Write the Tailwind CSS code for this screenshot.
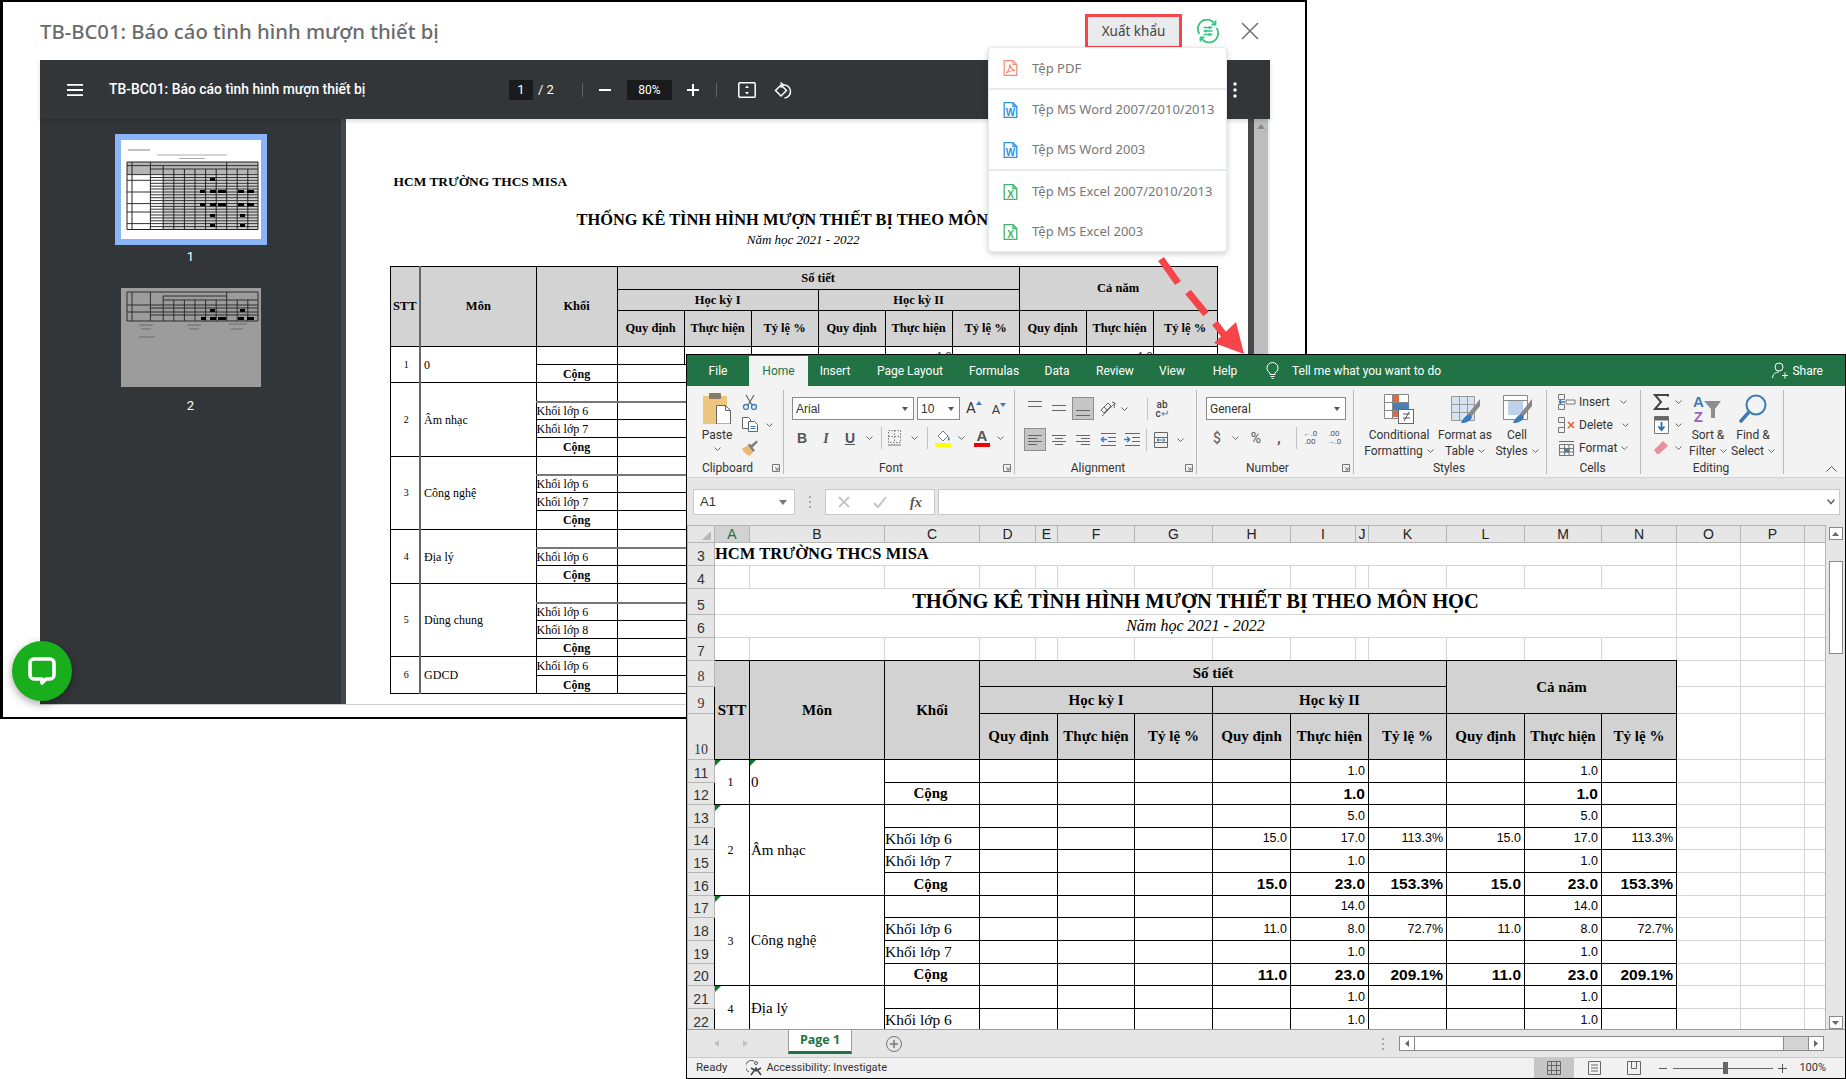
<!DOCTYPE html>
<html lang="vi">
<head>
<meta charset="UTF-8">
<title>Xuất khẩu báo cáo</title>
<script src="https://cdn.jsdelivr.net/npm/@tailwindcss/browser@4"></script>
</head>
<body class="relative w-[1846px] h-[1079px] overflow-hidden bg-white [font-family:'Noto_Sans',sans-serif]">

<!-- shared icons -->
<svg class="hidden">
  <symbol id="chev" viewBox="0 0 7 4"><path d="M.5.5l3 3 3-3" fill="none" stroke="#666"/></symbol>
  <symbol id="launch" viewBox="0 0 8 8"><path d="M.5 7.500v-7h7v7z M3 3l3 3M6 3.500V6H3.500" fill="none" stroke="#777"/></symbol>
  <symbol id="word" viewBox="0 0 14 16"><path d="M.7.7h8.800l3.800 3.800v10.800H.7z M9.500.7v3.800h3.800" fill="none" stroke="#2f8fe0" stroke-width="1.300"/><text x="7" y="13.500" text-anchor="middle" font-family="Liberation Sans" font-weight="700" font-size="10" fill="#2f8fe0">W</text></symbol>
  <symbol id="excel" viewBox="0 0 14 16"><path d="M.7.7h8.800l3.800 3.800v10.800H.7z M9.500.7v3.800h3.800" fill="none" stroke="#41b56f" stroke-width="1.300"/><text x="7" y="13.500" text-anchor="middle" font-family="Liberation Sans" font-weight="700" font-size="10" fill="#41b56f">X</text></symbol>
</svg>

<!-- report preview window -->
<div class="absolute left-0 top-0 w-[1307px] h-[719px] flex flex-col border-t-2 border-r-2 border-b-2 border-l-[3px] border-black bg-white">
  <div class="h-[58px] shrink-0 flex items-center pl-[37px] pr-[46px]">
    <div class="text-[20.300px] text-[#6b6b6b] font-medium whitespace-nowrap">TB-BC01: Báo cáo tình hình mượn thiết bị</div>
    <div class="ml-auto w-[97px] h-[35px] flex items-center justify-center border-[3px] border-[#f5444a] bg-[#e9ebef] text-[13.500px] text-[#444]">Xuất khẩu</div>
    <svg class="ml-[14px] w-[24px] h-[24px]" viewBox="0 0 24 24" fill="none" stroke="#33c481" stroke-width="1.800"><path d="M3.500 15a9 9 0 0 1 15-10.500M20.500 9a9 9 0 0 1-15 10.500"/><path d="M19.500 1.500v4h-4M4.500 22.500v-4h4" stroke-linejoin="round"/><path d="M7.500 8.500h9M7.500 12h9M7.500 15.500h9" stroke-width="1.500"/><path d="M13.500 7v3M10 10.500v3M13.500 14v3" stroke-width="1.500"/></svg>
    <svg class="ml-[21px] w-[18px] h-[18px]" viewBox="0 0 18 18" stroke="#6f6f6f" stroke-width="1.500"><path d="M1 1l16 16M17 1L1 17"/></svg>
  </div>

  <div class="ml-[37px] w-[1230px] h-[645px] flex flex-col bg-white border-b border-[#cfcfcf]">
    <!-- pdf viewer toolbar -->
    <div class="relative h-[59px] shrink-0 flex items-center bg-[#323639] text-white shadow-[0_2px_4px_rgba(0,0,0,0.15)] [font-family:Roboto,sans-serif]">
      <svg class="ml-[27px] w-[16px] h-[12px]" viewBox="0 0 16 12" fill="#fff"><path d="M0 0h16v1.800H0zM0 5.100h16v1.800H0zM0 10.200h16V12H0z"/></svg>
      <div class="ml-[26px] w-[257px] text-[13.900px] font-medium whitespace-nowrap">TB-BC01: Báo cáo tình hình mượn thiết bị</div>
      <div class="ml-[143px] w-[24px] h-[20px] flex items-center justify-center bg-[#191b1c] text-[13px]">1</div>
      <div class="ml-[5px] w-[20px] text-[13px] whitespace-nowrap">/ 2</div>
      <div class="ml-[24px] w-px h-[14px] bg-[#5f6368]"></div>
      <div class="ml-[16px] w-[12px] h-[2px] bg-white"></div>
      <div class="ml-[16px] w-[45px] h-[20px] flex items-center justify-center bg-[#191b1c] text-[12px]">80%</div>
      <svg class="ml-[15px] w-[12px] h-[12px]" viewBox="0 0 12 12" fill="#fff"><path d="M5 0h2v5h5v2H7v5H5V7H0V5h5z"/></svg>
      <div class="ml-[17px] w-px h-[14px] bg-[#5f6368]"></div>
      <svg class="ml-[21px] w-[18px] h-[16px]" viewBox="0 0 18 16" fill="none" stroke="#fff" stroke-width="1.500"><rect x=".8" y=".8" width="16.400" height="14.400" rx="1"/><path d="M9 3.500l-2 2.500h4zM9 12.500l-2-2.500h4z" fill="#fff" stroke="none"/></svg>
      <svg class="ml-[18px] w-[18px] h-[18px]" viewBox="0 0 18 18" fill="none" stroke="#fff" stroke-width="1.500"><path d="M7 4l-5.500 5.500L7 15l5.500-5.500z"/><path d="M6.500 1.500l3 2.500-3 2.500" /><path d="M9.500 4a6.500 6.500 0 0 1 1 13"/></svg>
      <svg class="ml-auto mr-[33px] w-[4px] h-[16px]" viewBox="0 0 4 16" fill="#fff"><circle cx="2" cy="2" r="1.700"/><circle cx="2" cy="8" r="1.700"/><circle cx="2" cy="14" r="1.700"/></svg>
    </div>

    <div class="flex-1 min-h-0 flex">
      <!-- page thumbnails -->
      <div class="w-[301px] shrink-0 flex flex-col items-center pt-[15px] bg-[#323639] text-white text-[13px] [font-family:Roboto,sans-serif]">
        <div class="w-[152px] h-[111px] p-[6px] bg-[#8ab4f8]">
          <svg class="w-[140px] h-[99px] bg-white" viewBox="0 0 140 99">
            <path d="M7 10h22" stroke="#666" stroke-width=".8"/><path d="M36 15h70M58 18.500h26" stroke="#999" stroke-width=".8"/>
            <path d="M6 22h131v12.600H6z" fill="#b5b5b5"/>
            <path d="M42 34.600h95v55H42z" fill="#cfcfcf"/>
            <path d="M6 25.600h131M29 29h108M6 34.600h131M29 37.500h108M6 40.300h131M29 43.300h108M29 46.200h108M29 49h108M6 52h131M29 54.800h108M29 57.700h108M29 60.600h108M6 63.600h131M29 66.400h108M29 69.200h108M6 72h131M29 75h108M29 77.900h108M29 80.800h108M6 83.600h131M29 86.600h108" stroke="#333" stroke-width="1" fill="none"/>
            <path d="M6 22h131v67.500H6zM11 22v67.500M29.400 22v67.500M42.200 25.600v64M52.800 29v60.500M63.400 29v60.500M74 29v60.500M84.600 29v60.500M95.200 29v60.500M105.700 22v67.500M116.200 29v60.500M126.800 29v60.500" stroke="#222" stroke-width="1" fill="none"/>
            <path d="M89 38h5v3h-5zM79 50h5v3h-5zM89 50h6v3h-6zM97 50h8v3h-8zM117 50h6v3h-6zM126 50h7v3h-7zM89 38h5zM79 63h5v3h-5zM89 63h6v3h-6zM97 63h8v3h-8zM117 63h6v3h-6zM126 63h7v3h-7zM89 74h5v3h-5zM119 74h5v3h-5zM89 84h5v3h-5zM119 84h5v3h-5z" fill="#000"/>
          </svg>
        </div>
        <div class="h-[24px] flex items-center">1</div>
        <svg class="mt-[19px] w-[140px] h-[99px] bg-[#9c9c9c]" viewBox="0 0 140 99">
          <path d="M6 4h131v29H6zM11 4v29M29.400 4v29M42.200 8v25M52.800 12v21M63.400 12v21M74 12v21M84.600 12v21M95.200 12v21M105.700 4v29M116.200 12v21M126.800 12v21M42 8h64M42 12h95M6 17h131M29 20h108M6 24h131M29 27h108" stroke="#2c2c2c" stroke-width="1" fill="none"/>
          <path d="M80 29h5v3h-5zM89 29h6v3h-6zM97 29h8v3h-8zM117 29h6v3h-6zM126 29h7v3h-7zM89 21h5v3h-5zM119 21h5v3h-5z" fill="#000"/>
          <path d="M18 37h14M20 41h10M66 37h14M68 41h10M108 36h18M110 41h12M18 49h16" stroke="#6a6a6a" stroke-width="1"/>
        </svg>
        <div class="h-[38px] flex items-center">2</div>
      </div>
      <div class="w-[5px] shrink-0 bg-[#45494c]"></div>

      <!-- pdf page -->
      <div class="flex-1 min-w-0 overflow-hidden pl-[43.600px] [font-family:'Liberation_Serif',serif] text-black">
        <div class="w-[827px]">
          <div class="mt-[54px] h-[18px] pl-[4px] text-[13.400px] font-bold leading-[18px] whitespace-nowrap">HCM TRƯỜNG THCS MISA</div>
          <div class="mt-[20px] h-[18px] text-center text-[16.400px] font-bold leading-[18px] whitespace-nowrap">THỐNG KÊ TÌNH HÌNH MƯỢN THIẾT BỊ THEO MÔN HỌC</div>
          <div class="mt-[4px] h-[14px] text-center text-[13px] italic leading-[14px]">Năm học 2021 - 2022</div>
          <table class="mt-[19px] w-[827px] table-fixed border-collapse text-[12px] leading-none [&_td]:border [&_td]:border-black [&_td]:p-0 [&_td[rowspan]:nth-child(2)]:border-l-2 [&_td[rowspan]:nth-child(2)]:border-l-[#666]">
            <colgroup><col class="w-[30px]"><col class="w-[116px]"><col class="w-[81px]"><col class="w-[67px]"><col class="w-[67px]"><col class="w-[67px]"><col class="w-[67px]"><col class="w-[67px]"><col class="w-[67px]"><col class="w-[67px]"><col class="w-[67px]"><col class="w-[64px]"></colgroup>
            <tbody class="font-bold text-center bg-[#d3d3d3] text-[12.500px]">
              <tr class="h-[23px]"><td rowspan="3">STT<td rowspan="3">Môn<td rowspan="3">Khối<td colspan="6">Số tiết<td colspan="3" rowspan="2">Cả năm
              <tr class="h-[21px]"><td colspan="3">Học kỳ I<td colspan="3">Học kỳ II
              <tr class="h-[36px]"><td>Quy định<td>Thực hiện<td>Tỷ lệ %<td>Quy định<td>Thực hiện<td>Tỷ lệ %<td>Quy định<td>Thực hiện<td>Tỷ lệ %
            </tbody>
            <tbody class="[&_td:first-child[rowspan]]:text-center [&_td:first-child[rowspan]]:text-[10px] [&_td[rowspan]]:pl-[3px]">
              <tr class="h-[18px]"><td rowspan="2">1<td rowspan="2">0<td><td><td><td><td><td class="pr-[2px] text-right">1.0<td><td><td class="pr-[2px] text-right">1.0<td>
              <tr class="h-[18px]"><td class="font-bold text-center">Cộng<td colspan="9">
              <tr class="h-[19px] [&>td:not([rowspan])]:border-b-2 [&>td:not([rowspan])]:border-b-[#777]"><td rowspan="4">2<td rowspan="4">Âm nhạc<td><td colspan="9">
              <tr class="h-[18px]"><td class="pl-[4px]">Khối lớp 6<td colspan="9">
              <tr class="h-[18px]"><td class="pl-[4px]">Khối lớp 7<td colspan="9">
              <tr class="h-[19px]"><td class="font-bold text-center">Cộng<td colspan="9">
              <tr class="h-[18px] [&>td:not([rowspan])]:border-b-2 [&>td:not([rowspan])]:border-b-[#777]"><td rowspan="4">3<td rowspan="4">Công nghệ<td><td colspan="9">
              <tr class="h-[18px]"><td class="pl-[4px]">Khối lớp 6<td colspan="9">
              <tr class="h-[18px]"><td class="pl-[4px]">Khối lớp 7<td colspan="9">
              <tr class="h-[19px]"><td class="font-bold text-center">Cộng<td colspan="9">
              <tr class="h-[18px] [&>td:not([rowspan])]:border-b-2 [&>td:not([rowspan])]:border-b-[#777]"><td rowspan="3">4<td rowspan="3">Địa lý<td><td colspan="9">
              <tr class="h-[18px]"><td class="pl-[4px]">Khối lớp 6<td colspan="9">
              <tr class="h-[18px]"><td class="font-bold text-center">Cộng<td colspan="9">
              <tr class="h-[19px] [&>td:not([rowspan])]:border-b-2 [&>td:not([rowspan])]:border-b-[#777]"><td rowspan="4">5<td rowspan="4">Dùng chung<td><td colspan="9">
              <tr class="h-[18px]"><td class="pl-[4px]">Khối lớp 6<td colspan="9">
              <tr class="h-[18px]"><td class="pl-[4px]">Khối lớp 8<td colspan="9">
              <tr class="h-[18px]"><td class="font-bold text-center">Cộng<td colspan="9">
              <tr class="h-[19px]"><td rowspan="2">6<td rowspan="2">GDCD<td class="pl-[4px]">Khối lớp 6<td colspan="9">
              <tr class="h-[18px]"><td class="font-bold text-center">Cộng<td colspan="9">
            </tbody>
          </table>
        </div>
      </div>
      <div class="w-[6px] shrink-0 bg-[#45494c]"></div>
      <div class="w-[14px] shrink-0 bg-[#bdbdbd] flex justify-center pt-[5px]"><svg class="w-[8px] h-[5px]" viewBox="0 0 8 5" fill="#888"><path d="M4 0l4 5H0z"/></svg></div>
      <div class="w-[2px] shrink-0 bg-[#eeeeee]"></div>
    </div>
  </div>
</div>

<!-- floating chat button -->
<div class="absolute left-[12px] top-[641px] w-[60px] h-[60px] flex items-center justify-center rounded-full bg-[#18ae1c] shadow-[0_3px_8px_rgba(0,0,0,0.35)]">
  <svg class="w-[30px] h-[30px]" viewBox="0 0 30 30" fill="none" stroke="#fff" stroke-width="3.600" stroke-linejoin="round"><path d="M7 3h16a4 4 0 0 1 4 4v12a4 4 0 0 1-4 4h-4l-4 4v-4H7a4 4 0 0 1-4-4V7a4 4 0 0 1 4-4z"/></svg>
</div>

<!-- export menu -->
<div class="absolute left-[988px] top-[47px] w-[239px] h-[205px] flex flex-col bg-white rounded-[4px] border border-[#e7e9f0] shadow-[0_2px_6px_rgba(0,0,0,0.2)] text-[13px] text-[#777] whitespace-nowrap">
  <div class="h-[40px] pt-px flex items-center pl-[14px] gap-[14px]"><svg class="w-[15px] h-[16px]" viewBox="0 0 14 16" fill="none" stroke="#f58a76" stroke-width="1.200"><path d="M.7.7h8.800l3.800 3.800v10.800H.7zM9.500.7v3.800h3.800"/><path d="M2.500 13c2-1 4-5 3.800-8.500.8 3.500 2.500 5.500 5.200 6-3 0-6 .5-9 2.500z"/></svg>Tệp PDF</div>
  <div class="h-[2px] bg-[#e6e8f2]"></div>
  <div class="h-[40px] pt-px flex items-center pl-[14px] gap-[14px]"><svg class="w-[15px] h-[16px]"><use href="#word"/></svg>Tệp MS Word 2007/2010/2013</div>
  <div class="h-[40px] pt-px flex items-center pl-[14px] gap-[14px]"><svg class="w-[15px] h-[16px]"><use href="#word"/></svg>Tệp MS Word 2003</div>
  <div class="h-[2px] bg-[#e6e8f2]"></div>
  <div class="h-[40px] pt-px flex items-center pl-[14px] gap-[14px]"><svg class="w-[15px] h-[16px]"><use href="#excel"/></svg>Tệp MS Excel 2007/2010/2013</div>
  <div class="h-[40px] pt-px flex items-center pl-[14px] gap-[14px]"><svg class="w-[15px] h-[16px]"><use href="#excel"/></svg>Tệp MS Excel 2003</div>
</div>

<!-- excel window -->
<div class="absolute left-[686px] top-[354px] w-[1160px] h-[725px] flex flex-col border border-black bg-[#e6e6e6] text-[12px] text-[#333] [font-family:Roboto,sans-serif]">
  <!-- tabs -->
  <div class="h-[31px] shrink-0 flex items-stretch bg-[#217346] text-white text-[12px]">
    <div class="w-[62px] flex items-center justify-center">File</div>
    <div class="mt-px w-[59px] flex items-center justify-center bg-[#f3f3f3] text-[#217346]">Home</div>
    <div class="w-[54px] flex items-center justify-center">Insert</div>
    <div class="w-[96px] flex items-center justify-center">Page Layout</div>
    <div class="w-[72px] flex items-center justify-center">Formulas</div>
    <div class="w-[54px] flex items-center justify-center">Data</div>
    <div class="w-[62px] flex items-center justify-center">Review</div>
    <div class="w-[52px] flex items-center justify-center">View</div>
    <div class="w-[54px] flex items-center justify-center">Help</div>
    <div class="w-[40px] flex items-center justify-center"><svg class="w-[13px] h-[17px]" viewBox="0 0 13 17" fill="none" stroke="#fff"><path d="M4 12.500v-1.500C2.500 10 1 8.500 1 6a5.500 5.500 0 0 1 11 0c0 2.500-1.500 4-3 5v1.500zM4.500 14.500h4M5.500 16.500h2"/></svg></div>
    <div class="flex items-center whitespace-nowrap">Tell me what you want to do</div>
    <div class="ml-auto pr-[22px] flex items-center gap-[3px]"><svg class="w-[17px] h-[17px]" viewBox="0 0 17 17" fill="none" stroke="#fff"><circle cx="7" cy="5" r="4"/><path d="M.5 16c.5-4 3-6 6.500-6M10 13.500h6M13 10.500v6"/></svg>Share</div>
  </div>

  <!-- ribbon -->
  <div class="h-[92px] shrink-0 flex pt-[4px] bg-[#f3f3f3] border-b border-[#d2d2d2]">
    <!-- Clipboard -->
    <div class="w-[97px] h-[84px] flex flex-col border-r border-[#b9b9b9]">
      <div class="h-[74px] flex">
        <div class="ml-[5px] w-[50px] flex flex-col items-center">
          <svg class="mt-[3px] w-[28px] h-[31px]" viewBox="0 0 28 31"><rect x="0" y="3" width="24" height="28" rx="1" fill="#eec67f"/><rect x="6" y="0" width="12" height="6" rx="1" fill="#857a69"/><path d="M13.500 12.500h9l5 5v13.500h-14z" fill="#fff" stroke="#666"/><path d="M22.500 12.500v5h5" fill="none" stroke="#666"/></svg>
          <div class="mt-[3px] leading-[16px]">Paste</div>
          <svg class="mt-[4px] w-[7px] h-[4px]"><use href="#chev"/></svg>
        </div>
        <div class="flex flex-col">
          <div class="h-[23px] flex items-center"><svg class="w-[16px] h-[16px]" viewBox="0 0 16 16" fill="none" stroke="#666"><path d="M4 1l6 10M12 1L6 11" stroke-width="1.200"/><circle cx="4" cy="13" r="2.500" stroke="#3c7ab8" stroke-width="1.300"/><circle cx="12" cy="13" r="2.500" stroke="#3c7ab8" stroke-width="1.300"/></svg></div>
          <div class="h-[23px] flex items-center"><svg class="w-[17px] h-[15px]" viewBox="0 0 17 15" fill="#fff" stroke="#666"><path d="M.5.500h6l2 2v9h-8z"/><path d="M6.500 4.500h6l3 3v7h-9z"/><path d="M8.500 9.500h5M8.500 11.500h5" stroke="#3c7ab8"/></svg><svg class="ml-[7px] w-[7px] h-[4px]"><use href="#chev"/></svg></div>
          <div class="h-[23px] flex items-center"><svg class="w-[17px] h-[16px]" viewBox="0 0 17 16"><path d="M0 9l6-4 5 7-3 4c-3-1-6-3-8-7z" fill="#e9b96e"/><path d="M6 5l5 7 2-1.500-2.500-3L16 2l-1.500-1.500L9 5 7.500 3.500z" fill="#7d7d7d"/></svg></div>
        </div>
      </div>
      <div class="flex items-center"><div class="w-[81px] text-center leading-[12px]">Clipboard</div><div class="w-[15px] flex justify-center"><svg class="w-[8px] h-[8px]"><use href="#launch"/></svg></div></div>
    </div>

    <!-- Font -->
    <div class="w-[231px] h-[84px] flex flex-col border-r border-[#b9b9b9]">
      <div class="h-[74px] pt-[7px]">
        <div class="h-[23px] flex items-center">
          <div class="ml-[8px] w-[122px] h-[23px] flex items-center justify-between px-[3px] bg-white border border-[#8a8a8a] [font-family:'Liberation_Sans',sans-serif]">Arial<svg class="mr-[2px] w-[6px] h-[4px]" viewBox="0 0 6 4" fill="#555"><path d="M0 0h6L3 4z"/></svg></div>
          <div class="ml-[3px] w-[43px] h-[23px] flex items-center justify-between px-[3px] bg-white border border-[#8a8a8a] [font-family:'Liberation_Sans',sans-serif]">10<svg class="mr-[2px] w-[6px] h-[4px]" viewBox="0 0 6 4" fill="#555"><path d="M0 0h6L3 4z"/></svg></div>
          <div class="ml-[2px] w-[24px] flex justify-center text-[15px] leading-none">A<svg class="w-[6px] h-[4px]" viewBox="0 0 6 4" fill="#3c7ab8"><path d="M3 0l3 4H0z"/></svg></div>
          <div class="ml-px w-[24px] flex justify-center text-[13px] leading-none pt-[2px]">A<svg class="w-[6px] h-[4px]" viewBox="0 0 6 4" fill="#3c7ab8"><path d="M0 0h6L3 4z"/></svg></div>
        </div>
        <div class="mt-[6px] h-[24px] flex items-center text-[14px] text-[#555] [font-family:'Liberation_Serif',serif]">
          <div class="ml-[6px] w-[24px] text-center font-bold [font-family:'Liberation_Sans',sans-serif]">B</div>
          <div class="w-[24px] text-center italic font-bold">I</div>
          <div class="w-[24px] text-center underline font-bold [font-family:'Liberation_Sans',sans-serif]">U</div>
          <div class="w-[14px] flex justify-center"><svg class="w-[7px] h-[4px]"><use href="#chev"/></svg></div>
          <div class="ml-[5px] w-px h-[22px] bg-[#c2c2c2]"></div>
          <svg class="ml-[6px] w-[16px] h-[16px]" viewBox="0 0 16 16" fill="none" stroke="#777" stroke-dasharray="1.500 1.500"><path d="M.5.500h12v12H.5zM6.500.5v12M.5 6.500h12"/><path d="M0 15h13" stroke-dasharray="0" stroke="#777"/></svg>
          <div class="w-[20px] flex justify-center"><svg class="w-[7px] h-[4px]"><use href="#chev"/></svg></div>
          <div class="ml-[3px] w-px h-[22px] bg-[#c2c2c2]"></div>
          <svg class="ml-[7px] w-[16px] h-[18px]" viewBox="0 0 16 18"><path d="M3 7l5-5 5 5-5 5z" fill="#fff" stroke="#777"/><path d="M13 7c1.500 2 2 3 1.500 4-.5 1-2 .5-1.500-1z" fill="#3c7ab8"/><path d="M0 14h16v4H0z" fill="#ffff00"/></svg>
          <div class="w-[20px] flex justify-center"><svg class="w-[7px] h-[4px]"><use href="#chev"/></svg></div>
          <div class="w-[22px] flex flex-col items-center text-[15px] leading-[14px] font-bold text-[#555] [font-family:'Liberation_Sans',sans-serif]">A<div class="w-[16px] h-[4px] bg-[#f00000]"></div></div>
          <div class="w-[14px] flex justify-center"><svg class="w-[7px] h-[4px]"><use href="#chev"/></svg></div>
        </div>
      </div>
      <div class="flex items-center"><div class="w-[214px] text-center leading-[12px]">Font</div><div class="ml-[2px] w-[14px] flex justify-center"><svg class="w-[8px] h-[8px]"><use href="#launch"/></svg></div></div>
    </div>

    <!-- Alignment -->
    <div class="w-[182px] h-[84px] flex flex-col border-r border-[#b9b9b9]">
      <div class="h-[74px] pt-[7px]">
        <div class="h-[23px] flex items-center">
          <svg class="ml-[9px] w-[22px] h-[23px]" viewBox="0 0 22 23" stroke="#666"><path d="M4 4.500h14M4 9.500h14"/></svg>
          <svg class="ml-[2px] w-[22px] h-[23px]" viewBox="0 0 22 23" stroke="#666"><path d="M4 8.500h14M4 13.500h14"/></svg>
          <svg class="ml-[2px] w-[22px] h-[23px] bg-[#c6c6c6] border border-[#8f8f8f]" viewBox="0 0 20 21" stroke="#666"><path d="M3 12.500h14M3 17.500h14"/></svg>
          <svg class="ml-[3px] w-[22px] h-[23px]" viewBox="0 0 22 23" fill="none" stroke="#666"><path d="M4 13l7-7 3 3-7 7zM7 10l3 3M15 5l3 1-1 5M5 19l13-13"/></svg>
          <div class="w-[10px] flex justify-center"><svg class="w-[7px] h-[4px]"><use href="#chev"/></svg></div>
          <div class="ml-[18px] w-px h-[22px] bg-[#c2c2c2]"></div>
          <div class="ml-[4px] w-[20px] text-center text-[10px] leading-[9px] text-[#444] font-medium">ab<br>c<span class="text-[#3c7ab8]">↵</span></div>
        </div>
        <div class="mt-[8px] h-[23px] flex items-center">
          <svg class="ml-[9px] w-[22px] h-[23px] bg-[#c6c6c6] border border-[#8f8f8f]" viewBox="0 0 20 21" stroke="#666"><path d="M3 6.500h14M3 9.500h9M3 12.500h14M3 15.500h9"/></svg>
          <svg class="ml-[2px] w-[22px] h-[23px]" viewBox="0 0 22 23" stroke="#666"><path d="M4 7.500h14M7 10.500h8M4 13.500h14M7 16.500h8"/></svg>
          <svg class="ml-[2px] w-[22px] h-[23px]" viewBox="0 0 22 23" stroke="#666"><path d="M4 7.500h14M9 10.500h9M4 13.500h14M9 16.500h9"/></svg>
          <svg class="ml-[3px] w-[22px] h-[23px]" viewBox="0 0 22 23" fill="none" stroke="#666"><path d="M4 5.500h15M11 9.500h8M11 13.500h8M4 17.500h15"/><path d="M4 11.500h6M4 11.500l3-2.500M4 11.500l3 2.500" stroke="#3c7ab8" stroke-width="1.300"/></svg>
          <svg class="ml-[2px] w-[22px] h-[23px]" viewBox="0 0 22 23" fill="none" stroke="#666"><path d="M4 5.500h15M11 9.500h8M11 13.500h8M4 17.500h15"/><path d="M3 11.500h6M9 11.500l-3-2.500M9 11.500l-3 2.500" stroke="#3c7ab8" stroke-width="1.300"/></svg>
          <div class="ml-[3px] w-px h-[22px] bg-[#c2c2c2]"></div>
          <svg class="ml-[4px] w-[20px] h-[18px]" viewBox="0 0 20 18" fill="none" stroke="#666"><path d="M3.500 1.500h13v15h-13zM3.500 6.500h13M3.500 11.500h13"/><path d="M6 9h8M6 9l2-1.500M6 9l2 1.500M14 9l-2-1.500M14 9l-2 1.500" stroke="#3c7ab8"/></svg>
          <div class="ml-[4px] w-[10px] flex justify-center"><svg class="w-[7px] h-[4px]"><use href="#chev"/></svg></div>
        </div>
      </div>
      <div class="flex items-center"><div class="w-[166px] text-center leading-[12px]">Alignment</div><div class="ml-px w-[14px] flex justify-center"><svg class="w-[8px] h-[8px]"><use href="#launch"/></svg></div></div>
    </div>

    <!-- Number -->
    <div class="w-[157px] h-[84px] flex flex-col border-r border-[#b9b9b9]">
      <div class="h-[74px] pt-[7px]">
        <div class="ml-[9px] w-[140px] h-[23px] flex items-center justify-between px-[3px] bg-white border border-[#8a8a8a]">General<svg class="mr-[2px] w-[6px] h-[4px]" viewBox="0 0 6 4" fill="#555"><path d="M0 0h6L3 4z"/></svg></div>
        <div class="mt-[6px] h-[24px] flex items-center text-[14px] text-[#555]">
          <div class="ml-[10px] w-[20px] text-center">$</div>
          <div class="w-[16px] flex justify-center"><svg class="w-[7px] h-[4px]"><use href="#chev"/></svg></div>
          <div class="ml-[2px] w-[22px] text-center">%</div>
          <div class="ml-[2px] w-[20px] text-center font-bold">,</div>
          <div class="ml-[7px] w-px h-[22px] bg-[#c2c2c2]"></div>
          <div class="ml-[2px] w-[22px] text-center text-[8px] leading-[8px] text-[#555]"><span class="text-[#3c7ab8]">←</span>.0<br>.00</div>
          <div class="ml-[2px] w-[22px] text-center text-[8px] leading-[8px] text-[#555]">.00<br><span class="text-[#3c7ab8]">→</span>.0</div>
        </div>
      </div>
      <div class="flex items-center"><div class="w-[141px] text-center leading-[12px]">Number</div><div class="w-[15px] flex justify-center"><svg class="w-[8px] h-[8px]"><use href="#launch"/></svg></div></div>
    </div>

    <!-- Styles -->
    <div class="w-[193px] h-[84px] flex flex-col border-r border-[#b9b9b9]">
      <div class="h-[74px] flex pl-[8px] text-center leading-[16px] whitespace-nowrap">
        <div class="w-[74px] flex flex-col items-center">
          <svg class="mt-[4px] mb-[3px] w-[30px] h-[30px]" viewBox="0 0 30 30"><path d="M.5.500h24v24H.5zM8.500.5v24M.5 8.500h24M.5 16.500h24" fill="#fff" stroke="#888"/><path d="M9 1h6v7H9z" fill="#e06a3e"/><path d="M9 9h16v7H9z" fill="#4a7fb5"/><path d="M9 17h13v6H9z" fill="#e06a3e"/><rect x="14.500" y="15.500" width="15" height="14" fill="#fff" stroke="#666"/><path d="M19 20h7M19 24h7M25 18l-5 9" stroke="#555"/></svg>
          <div>Conditional</div>
          <div class="flex items-center gap-[4px]">Formatting<svg class="w-[7px] h-[4px]"><use href="#chev"/></svg></div>
        </div>
        <div class="w-[58px] flex flex-col items-center">
          <svg class="mt-[4px] mb-[3px] w-[30px] h-[30px]" viewBox="0 0 30 30"><path d="M1.500 2.500h23v24h-23z" fill="#d6e3f1"/><path d="M1.500 2.500h23v24h-23zM9.500 2.500v24M17.500 2.500v24M1.500 10.500h23M1.500 18.500h23" fill="none" stroke="#999"/><path d="M30 5L18 20l3 3L30 12z" fill="#888"/><path d="M19 20c-4 2-7 6-8 9 5 0 10-2 11-6z" fill="#3c7ab8"/></svg>
          <div>Format as</div>
          <div class="flex items-center gap-[4px]">Table<svg class="w-[7px] h-[4px]"><use href="#chev"/></svg></div>
        </div>
        <div class="w-[46px] flex flex-col items-center">
          <svg class="mt-[4px] mb-[3px] w-[30px] h-[30px]" viewBox="0 0 30 30"><path d="M1.500 1.500h24v24h-24z" fill="#fff" stroke="#888"/><path d="M6 7h15v14H6z" fill="#bcd2e8"/><path d="M1.500 6.500h24" stroke="#888"/><path d="M30 5L18 20l3 3L30 12z" fill="#888"/><path d="M19 20c-4 2-7 6-8 9 5 0 10-2 11-6z" fill="#3c7ab8"/></svg>
          <div>Cell</div>
          <div class="flex items-center gap-[4px]">Styles<svg class="w-[7px] h-[4px]"><use href="#chev"/></svg></div>
        </div>
      </div>
      <div class="text-center leading-[12px] pr-[2px]">Styles</div>
    </div>

    <!-- Cells -->
    <div class="w-[94px] h-[84px] flex flex-col border-r border-[#b9b9b9]">
      <div class="h-[74px] pl-[11px]">
        <div class="h-[23px] flex items-center"><svg class="w-[18px] h-[16px]" viewBox="0 0 18 16" fill="none" stroke="#777"><path d="M.5.500h6v5h-6zM.5 10.500h6v5h-6zM8 6h9v4H8z"/><path d="M1 8h6M1 8l2-2M1 8l2 2" stroke="#3c7ab8" stroke-width="1.300"/></svg><div class="ml-[3px] w-[37px]">Insert</div><div class="w-[14px] flex justify-center"><svg class="w-[7px] h-[4px]"><use href="#chev"/></svg></div></div>
        <div class="h-[23px] flex items-center"><svg class="w-[18px] h-[16px]" viewBox="0 0 18 16" fill="none" stroke="#777"><path d="M.5.500h6v5h-6zM.5 10.500h6v5h-6zM6.500 5.500v5"/><path d="M10 5l6 6M16 5l-6 6" stroke="#e8632f" stroke-width="1.600"/></svg><div class="ml-[3px] w-[39px]">Delete</div><div class="w-[14px] flex justify-center"><svg class="w-[7px] h-[4px]"><use href="#chev"/></svg></div></div>
        <div class="h-[23px] flex items-center"><svg class="w-[18px] h-[16px]" viewBox="0 0 18 16" fill="none" stroke="#777"><path d="M1.500 4.500h14v11h-14zM1.500 8.500h14M1.500 12h14M6.500 4.500v11M11 4.500v11"/><path d="M6.500 8.500H11V12H6.500z" fill="#3c7ab8"/><path d="M1 1.500h15" stroke="#3c7ab8"/></svg><div class="ml-[3px] w-[38px]">Format</div><div class="w-[14px] flex justify-center"><svg class="w-[7px] h-[4px]"><use href="#chev"/></svg></div></div>
      </div>
      <div class="text-center leading-[12px] pr-[2px]">Cells</div>
    </div>

    <!-- Editing -->
    <div class="w-[143px] h-[84px] flex flex-col border-r border-[#b9b9b9]">
      <div class="h-[74px] flex pl-[8px]">
        <div class="w-[34px] flex flex-col">
          <div class="h-[23px] flex items-center"><div class="w-[24px] flex justify-center"><svg class="w-[16px] h-[16px]" viewBox="0 0 16 16" fill="none" stroke="#444" stroke-width="2"><path d="M15 2.500V1H2l6 7-6 7h13v-1.500"/></svg></div><div class="w-[10px] flex justify-center"><svg class="w-[7px] h-[4px]"><use href="#chev"/></svg></div></div>
          <div class="h-[23px] flex items-center"><div class="w-[24px] flex justify-center"><svg class="w-[15px] h-[18px]" viewBox="0 0 15 18"><path d="M.5.500h14v17H.5z" fill="#fff" stroke="#777"/><path d="M.5.500h14v4H.5z" fill="#666"/><path d="M7.500 6v8M4.500 10.500l3 3.500 3-3.500" fill="none" stroke="#1f6fb8" stroke-width="1.800"/></svg></div><div class="w-[10px] flex justify-center"><svg class="w-[7px] h-[4px]"><use href="#chev"/></svg></div></div>
          <div class="h-[23px] flex items-center"><div class="w-[24px] flex justify-center"><svg class="w-[15px] h-[15px]" viewBox="0 0 15 15"><path d="M0 10l9-9 5 5-9 8H3z" fill="#ea8fa0"/></svg></div><div class="w-[10px] flex justify-center"><svg class="w-[7px] h-[4px]"><use href="#chev"/></svg></div></div>
        </div>
        <div class="w-[50px] flex flex-col items-center text-center leading-[16px]">
          <div class="mt-[4px] mb-[3px] w-[30px] h-[30px] flex"><div class="flex flex-col text-[15px] font-bold leading-[15px] [font-family:'Liberation_Sans',sans-serif]"><span class="text-[#3c7ab8]">A</span><span class="text-[#9a62ba]">Z</span></div><svg class="mt-[7px] w-[17px] h-[17px]" viewBox="0 0 17 17" fill="#8d8d8d"><path d="M0 0h17l-6 8v9H7V8z"/></svg></div>
          <div>Sort &amp;</div>
          <div class="flex items-center gap-[4px]">Filter<svg class="w-[7px] h-[4px]"><use href="#chev"/></svg></div>
        </div>
        <div class="w-[40px] flex flex-col items-center text-center leading-[16px]">
          <svg class="mt-[4px] mb-[3px] w-[28px] h-[30px]" viewBox="0 0 28 30" fill="none" stroke="#3c7ab8"><circle cx="17" cy="11" r="9.500" stroke-width="2"/><path d="M10 18L2 27" stroke-width="3.500" stroke-linecap="round"/></svg>
          <div>Find &amp;</div>
          <div class="flex items-center gap-[4px]">Select<svg class="w-[7px] h-[4px]"><use href="#chev"/></svg></div>
        </div>
      </div>
      <div class="text-center leading-[12px] pr-[2px]">Editing</div>
    </div>

    <div class="flex-1 h-[84px] flex items-end justify-end pb-[2px] pr-[8px]"><svg class="w-[11px] h-[6px]" viewBox="0 0 11 6" fill="none" stroke="#555"><path d="M.5 5.500l5-5 5 5"/></svg></div>
  </div>

  <!-- formula bar -->
  <div class="h-[47px] shrink-0 flex items-start pt-[11px]">
    <div class="ml-[6px] w-[102px] shrink-0 h-[26px] flex items-center justify-between pl-[6px] pr-[7px] bg-white border border-[#c9c9c9] text-[13px] [font-family:'Liberation_Sans',sans-serif]">A1<svg class="w-[8px] h-[5px]" viewBox="0 0 8 5" fill="#777"><path d="M0 0h8L4 5z"/></svg></div>
    <div class="w-[30px] shrink-0 h-[26px] flex items-center justify-center"><svg class="w-[2px] h-[12px]" viewBox="0 0 2 12" fill="#aaa"><path d="M0 0h2v2H0zM0 5h2v2H0zM0 10h2v2H0z"/></svg></div>
    <div class="w-[110px] shrink-0 h-[26px] flex items-center bg-white border border-[#c9c9c9]">
      <svg class="ml-[12px] w-[12px] h-[12px]" viewBox="0 0 12 12" stroke="#c4c4c4" stroke-width="1.800"><path d="M1 1l10 10M11 1L1 11"/></svg>
      <svg class="ml-[23px] w-[14px] h-[12px]" viewBox="0 0 14 12" fill="none" stroke="#c4c4c4" stroke-width="2"><path d="M1 7l4 4 8-10"/></svg>
      <div class="ml-[23px] text-[14px] italic font-bold text-[#555] [font-family:'Liberation_Serif',serif]">fx</div>
    </div>
    <div class="ml-[3px] mr-[5px] flex-1 h-[26px] flex items-center justify-end pr-[4px] bg-white border border-[#c9c9c9]"><svg class="w-[8px] h-[6px]" viewBox="0 0 8 6" fill="none" stroke="#666" stroke-width="1.500"><path d="M.5.500L4 4.500 7.500.5"/></svg></div>
  </div>

  <!-- sheet -->
  <div class="h-[504px] shrink-0 flex">
    <div class="w-[1138px] h-[504px] overflow-hidden bg-white">
      <table class="w-[1138px] table-fixed border-collapse text-[12.500px] leading-none text-black [font-family:'Liberation_Sans',sans-serif] [&_td]:border [&_td]:border-[#d4d4d4] [&_td]:p-0 [&_td:first-child]:border-[#b5b5b5] [&_td:first-child]:bg-[#e6e6e6] [&_td:first-child]:text-center [&_td:first-child]:align-bottom [&_td:first-child]:text-[14px] [&_td:first-child]:font-normal [&_td:first-child]:text-[#333] [&_td:first-child]:pb-[2px]">
        <colgroup><col class="w-[27px]"><col class="w-[35px]"><col class="w-[135px]"><col class="w-[95px]"><col class="w-[56px]"><col class="w-[22px]"><col class="w-[77px]"><col class="w-[78px]"><col class="w-[78px]"><col class="w-[65px]"><col class="w-[13px]"><col class="w-[78px]"><col class="w-[78px]"><col class="w-[77px]"><col class="w-[75px]"><col class="w-[64px]"><col class="w-[64px]"><col class="w-[21px]"></colgroup>
        <tbody>
          <tr class="h-[17px] bg-[#e6e6e6] text-center text-[14px] text-[#222] [&>td:nth-child(n)]:border-[#b5b5b5]"><td><svg class="ml-auto mr-[3px] w-[9px] h-[9px]" viewBox="0 0 9 9" fill="#b8b8b8"><path d="M9 0v9H0z"/></svg><td class="bg-[#d2d2d2] text-[#217346] [&]:border-b-2 [&]:border-b-[#217346]">A<td>B<td>C<td>D<td>E<td>F<td>G<td>H<td>I<td>J<td>K<td>L<td>M<td>N<td>O<td>P<td>
          <tr class="h-[23px]"><td>3<td colspan="14" class="pl-[5px] text-[16.500px] font-bold [font-family:'Liberation_Serif',serif]">HCM TRƯỜNG THCS MISA<td><td><td>
          <tr class="h-[23px]"><td>4<td><td><td><td><td><td><td><td><td><td><td><td><td><td><td><td><td><td>
          <tr class="h-[26px]"><td>5<td colspan="14" class="text-center text-[20.500px] font-bold [font-family:'Liberation_Serif',serif]">THỐNG KÊ TÌNH HÌNH MƯỢN THIẾT BỊ THEO MÔN HỌC<td><td><td>
          <tr class="h-[23px]"><td>6<td colspan="14" class="text-center text-[16px] italic [font-family:'Liberation_Serif',serif]">Năm học 2021 - 2022<td><td><td>
          <tr class="h-[23px] [&>td:nth-child(n+2):nth-last-child(n+4)]:border-b-black"><td>7<td class="a"><td><td><td><td><td><td><td><td><td><td><td><td><td><td class="o"><td><td>
        </tbody>
        <tbody class="[&>tr>td:nth-child(n+2):nth-last-child(n+4)]:border-black">
          <tr class="h-[26px] text-center text-[15px] font-bold [font-family:'Liberation_Serif',serif] [&>td:nth-child(n+2):nth-last-child(n+4)]:bg-[#d2d2d2]"><td>8<td rowspan="3">STT<td rowspan="3">Môn<td rowspan="3">Khối<td colspan="8">Số tiết<td colspan="3" rowspan="2">Cả năm<td><td><td>
          <tr class="h-[27px] text-center text-[15px] font-bold [font-family:'Liberation_Serif',serif] [&>td:nth-child(n+2):nth-last-child(n+4)]:bg-[#d2d2d2]"><td>9<td colspan="4">Học kỳ I<td colspan="4">Học kỳ II<td><td><td>
          <tr class="h-[46px] text-center text-[15px] font-bold [font-family:'Liberation_Serif',serif] [&>td:nth-child(n+2):nth-last-child(n+4)]:bg-[#d2d2d2]"><td>10<td colspan="2">Quy định<td>Thực hiện<td>Tỷ lệ %<td>Quy định<td colspan="2">Thực hiện<td>Tỷ lệ %<td>Quy định<td>Thực hiện<td>Tỷ lệ %<td><td><td>
        </tbody>
        <tbody class="text-right [&>tr>td:nth-child(n+2):nth-last-child(n+4)]:border-black [&>tr>td:nth-child(n+2):nth-last-child(n+4)]:pr-[3px]">
          <tr class="h-[23px]"><td>11<td rowspan="2" class="relative text-center text-[12px] [font-family:'Liberation_Serif',serif]"><i class="absolute left-0 top-0 w-[6px] h-[6px] bg-[#0b7a24] [clip-path:polygon(0_0,100%_0,0_100%)]"></i>1<td rowspan="2" class="relative text-left text-[15px] [font-family:'Liberation_Serif',serif]"><i class="absolute left-0 top-0 w-[6px] h-[6px] bg-[#0b7a24] [clip-path:polygon(0_0,100%_0,0_100%)]"></i><span class="pl-[1px]">0</span><td><td colspan="2"><td><td><td><td colspan="2">1.0<td><td><td>1.0<td><td><td><td>
          <tr class="h-[22px] font-bold text-[15.500px]"><td>12<td class="text-center text-[15px] [font-family:'Liberation_Serif',serif]">Cộng<td colspan="2"><td><td><td><td colspan="2">1.0<td><td><td>1.0<td><td><td><td>
          <tr class="h-[23px]"><td>13<td rowspan="4" class="relative text-center text-[12px] [font-family:'Liberation_Serif',serif]"><i class="absolute left-0 top-0 w-[6px] h-[6px] bg-[#0b7a24] [clip-path:polygon(0_0,100%_0,0_100%)]"></i>2<td rowspan="4" class="text-left text-[15px] [font-family:'Liberation_Serif',serif]"><span class="pl-[1px]">Âm nhạc</span><td><td colspan="2"><td><td><td><td colspan="2">5.0<td><td><td>5.0<td><td><td><td>
          <tr class="h-[22px]"><td>14<td class="pl-[2px] text-left text-[15.500px] [font-family:'Liberation_Serif',serif]">Khối lớp 6<td colspan="2"><td><td><td>15.0<td colspan="2">17.0<td>113.3%<td>15.0<td>17.0<td>113.3%<td><td><td>
          <tr class="h-[23px]"><td>15<td class="pl-[2px] text-left text-[15.500px] [font-family:'Liberation_Serif',serif]">Khối lớp 7<td colspan="2"><td><td><td><td colspan="2">1.0<td><td><td>1.0<td><td><td><td>
          <tr class="h-[23px] font-bold text-[15.500px]"><td>16<td class="text-center text-[15px] [font-family:'Liberation_Serif',serif]">Cộng<td colspan="2"><td><td><td>15.0<td colspan="2">23.0<td>153.3%<td>15.0<td>23.0<td>153.3%<td><td><td>
          <tr class="h-[22px]"><td>17<td rowspan="4" class="relative text-center text-[12px] [font-family:'Liberation_Serif',serif]"><i class="absolute left-0 top-0 w-[6px] h-[6px] bg-[#0b7a24] [clip-path:polygon(0_0,100%_0,0_100%)]"></i>3<td rowspan="4" class="text-left text-[15px] [font-family:'Liberation_Serif',serif]"><span class="pl-[1px]">Công nghệ</span><td><td colspan="2"><td><td><td><td colspan="2">14.0<td><td><td>14.0<td><td><td><td>
          <tr class="h-[23px]"><td>18<td class="pl-[2px] text-left text-[15.500px] [font-family:'Liberation_Serif',serif]">Khối lớp 6<td colspan="2"><td><td><td>11.0<td colspan="2">8.0<td>72.7%<td>11.0<td>8.0<td>72.7%<td><td><td>
          <tr class="h-[23px]"><td>19<td class="pl-[2px] text-left text-[15.500px] [font-family:'Liberation_Serif',serif]">Khối lớp 7<td colspan="2"><td><td><td><td colspan="2">1.0<td><td><td>1.0<td><td><td><td>
          <tr class="h-[22px] font-bold text-[15.500px]"><td>20<td class="text-center text-[15px] [font-family:'Liberation_Serif',serif]">Cộng<td colspan="2"><td><td><td>11.0<td colspan="2">23.0<td>209.1%<td>11.0<td>23.0<td>209.1%<td><td><td>
          <tr class="h-[23px]"><td>21<td rowspan="2" class="relative text-center text-[12px] [font-family:'Liberation_Serif',serif]"><i class="absolute left-0 top-0 w-[6px] h-[6px] bg-[#0b7a24] [clip-path:polygon(0_0,100%_0,0_100%)]"></i>4<td rowspan="2" class="text-left text-[15px] [font-family:'Liberation_Serif',serif]"><span class="pl-[1px]">Địa lý</span><td><td colspan="2"><td><td><td><td colspan="2">1.0<td><td><td>1.0<td><td><td><td>
          <tr class="h-[23px]"><td>22<td class="pl-[2px] text-left text-[15.500px] [font-family:'Liberation_Serif',serif]">Khối lớp 6<td colspan="2"><td><td><td><td colspan="2">1.0<td><td><td>1.0<td><td><td><td>
        </tbody>
      </table>
    </div>
    <!-- vertical scrollbar -->
    <div class="w-[20px] flex flex-col items-center border-l border-[#b5b5b5] bg-[#e6e6e6]">
      <div class="mt-[2px] w-[14px] h-[13px] flex items-center justify-center bg-white border border-[#8a8a8a]"><svg class="w-[7px] h-[4px]" viewBox="0 0 7 4" fill="#666"><path d="M3.500 0L7 4H0z"/></svg></div>
      <div class="mt-[21px] w-[14px] h-[93px] bg-white border border-[#8a8a8a]"></div>
      <div class="mt-auto w-[14px] h-[13px] flex items-center justify-center bg-white border border-[#8a8a8a]"><svg class="w-[7px] h-[4px]" viewBox="0 0 7 4" fill="#666"><path d="M0 0h7L3.500 4z"/></svg></div>
    </div>
  </div>

  <!-- sheet tabs -->
  <div class="h-[28px] shrink-0 flex border-t border-[#9c9c9c] bg-[#e6e6e6]">
    <svg class="ml-[27px] mt-[10px] w-[5px] h-[7px]" viewBox="0 0 5 7" fill="#c0c0c0"><path d="M5 0v7L0 3.500z"/></svg>
    <svg class="ml-[24px] mt-[10px] w-[5px] h-[7px]" viewBox="0 0 5 7" fill="#c0c0c0"><path d="M0 0v7l5-3.500z"/></svg>
    <div class="ml-[40px] w-[64px] h-[24px] flex items-center justify-center bg-white border-x border-[#9c9c9c] border-b-[3px] border-b-[#217346] text-[12.500px] font-bold text-[#217346] [font-family:'Open_Sans',sans-serif]">Page 1</div>
    <svg class="ml-[34px] mt-[6px] w-[16px] h-[16px]" viewBox="0 0 16 16" fill="none" stroke="#777"><circle cx="8" cy="8" r="7.500"/><path d="M4 8h8M8 4v8" stroke-width="1.500"/></svg>
    <svg class="ml-[480px] mt-[8px] w-[2px] h-[12px]" viewBox="0 0 2 12" fill="#aaa"><path d="M0 0h2v2H0zM0 5h2v2H0zM0 10h2v2H0z"/></svg>
    <div class="ml-[15px] mt-[6px] w-[425px] h-[15px] flex bg-[#d4d4d4] border border-[#8a8a8a]">
      <div class="w-[15px] flex items-center justify-center bg-white border-r border-[#8a8a8a]"><svg class="w-[4px] h-[7px]" viewBox="0 0 4 7" fill="#666"><path d="M4 0v7L0 3.500z"/></svg></div>
      <div class="w-[369px] bg-white border-r border-[#8a8a8a]"></div>
      <div class="ml-auto w-[15px] flex items-center justify-center bg-white border-l border-[#8a8a8a]"><svg class="w-[4px] h-[7px]" viewBox="0 0 4 7" fill="#666"><path d="M0 0v7l4-3.500z"/></svg></div>
    </div>
  </div>

  <!-- status bar -->
  <div class="flex-1 flex items-stretch bg-[#f1f1f1] border-t border-[#c9c9c9] text-[11px] text-[#333]">
    <div class="ml-[9px] flex items-center text-[11.500px]">Ready</div>
    <svg class="ml-[19px] self-center w-[17px] h-[16px]" viewBox="0 0 17 16" fill="none" stroke="#555"><path d="M3 12A6 6 0 0 1 8 1" stroke-width="1"/><circle cx="10" cy="3" r="1.500"/><path d="M5 15l5-7 5 7M5 8l5 3 5-3" stroke="#444" stroke-width="1.500"/></svg>
    <div class="ml-[3px] flex items-center">Accessibility: Investigate</div>
    <div class="ml-auto w-[40px] flex items-center justify-center bg-[#c6c6c6]"><svg class="w-[14px] h-[14px]" viewBox="0 0 14 14" fill="none" stroke="#666"><path d="M.5.500h13v13H.5zM4.500.5v13M9.500.5v13M.5 4.500h13M.5 9.500h13"/></svg></div>
    <div class="w-[40px] flex items-center justify-center"><svg class="w-[13px] h-[14px]" viewBox="0 0 13 14" fill="none" stroke="#666"><path d="M.5.500h12v13H.5zM3 4h7M3 7h7M3 10h7"/></svg></div>
    <div class="w-[40px] flex items-center justify-center"><svg class="w-[14px] h-[14px]" viewBox="0 0 14 14" fill="none" stroke="#666"><path d="M.5.500h13v13H.5zM4.500.5v7h5v-7"/></svg></div>
    <div class="ml-[5px] w-[8px] h-px self-center bg-[#555]"></div>
    <div class="ml-[6px] relative w-[100px] h-px self-center bg-[#666]"><div class="absolute left-[50px] top-[-6px] w-[5px] h-[12px] bg-[#666]"></div></div>
    <svg class="ml-[5px] self-center w-[9px] h-[9px]" viewBox="0 0 9 9" stroke="#555"><path d="M0 4.500h9M4.500 0v9"/></svg>
    <div class="ml-[12px] mr-[19px] flex items-center">100%</div>
  </div>
</div>

<!-- red dashed arrow -->
<svg class="absolute left-[1150px] top-[250px] w-[110px] h-[110px]" viewBox="1150 250 110 110" fill="none" stroke="#f5444a" stroke-width="7"><path d="M1161 259l17 24M1188 292l18 22M1215 323l9 12"/><path d="M1236 322l-22 21 30 11z" fill="#f5444a" stroke="none"/></svg>

</body>
</html>
